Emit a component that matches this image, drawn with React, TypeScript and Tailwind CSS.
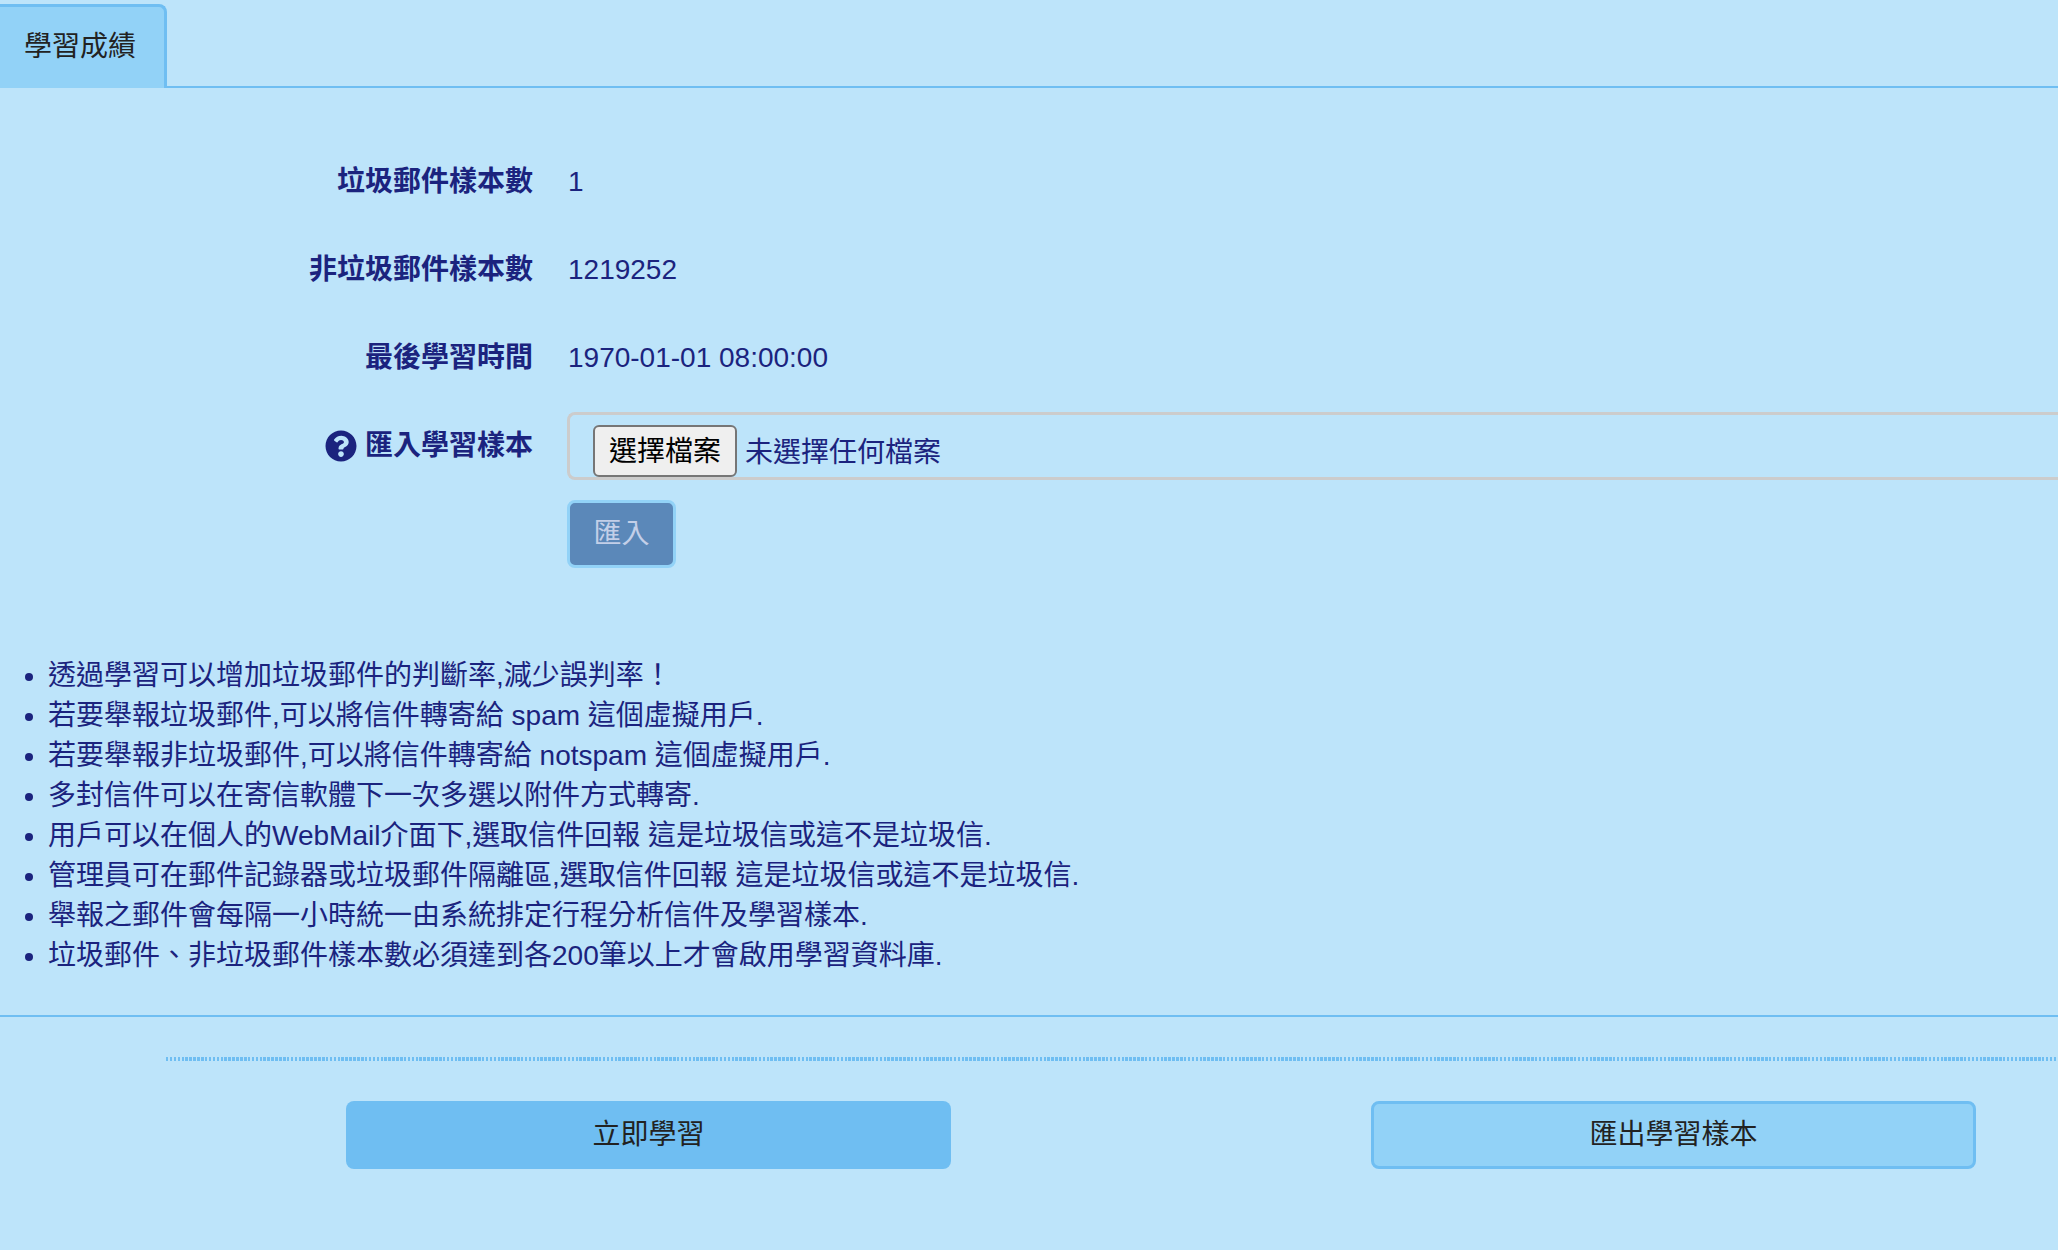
import React from 'react';
import { FaQuestionCircle } from 'react-icons/fa';

const fontStack = "font-['Liberation_Sans','Noto_Sans_CJK_TC',sans-serif]";

const notes = [
  '透過學習可以增加垃圾郵件的判斷率,減少誤判率！',
  '若要舉報垃圾郵件,可以將信件轉寄給 spam 這個虛擬用戶.',
  '若要舉報非垃圾郵件,可以將信件轉寄給 notspam 這個虛擬用戶.',
  '多封信件可以在寄信軟體下一次多選以附件方式轉寄.',
  '用戶可以在個人的WebMail介面下,選取信件回報 這是垃圾信或這不是垃圾信.',
  '管理員可在郵件記錄器或垃圾郵件隔離區,選取信件回報 這是垃圾信或這不是垃圾信.',
  '舉報之郵件會每隔一小時統一由系統排定行程分析信件及學習樣本.',
  '垃圾郵件、非垃圾郵件樣本數必須達到各200筆以上才會啟用學習資料庫.',
];

function Row({ label, children }: { label: React.ReactNode; children: React.ReactNode }) {
  return (
    <div className="flex h-[68px] items-center">
      <div className="flex w-[533px] shrink-0 items-center justify-end gap-2 font-bold">{label}</div>
      <div className="ml-[35px] min-w-0 flex-1">{children}</div>
    </div>
  );
}

export default function App() {
  return (
    <div className={`${fontStack} h-[1250px] overflow-hidden bg-[#bde4fa] text-[28px] text-[#1b237e]`}>
      <div className="flex h-[88px] items-end border-b-[2px] border-[#6fbef2] pt-1">
        <div className="-mb-[2px] flex h-[84px] w-[167px] items-center rounded-tr-[8px] border-t-[3px] border-r-[3px] border-[#6fbef2] bg-[#92d2f7] pb-[2px] pl-6 text-[#222]">
          學習成績
        </div>
      </div>

      <div className="flex flex-col gap-5 pt-[60px]">
        <Row label="垃圾郵件樣本數">1</Row>
        <Row label="非垃圾郵件樣本數">1219252</Row>
        <Row label="最後學習時間">1970-01-01 08:00:00</Row>
        <Row
          label={
            <>
              <FaQuestionCircle className="h-[32px] w-[32px]" />
              <span>匯入學習樣本</span>
            </>
          }
        >
          <div className="-ml-px flex h-[68px] items-end rounded-l-[8px] border-[3px] border-r-0 border-[#cccccc] pl-[23px]">
            <button className="flex h-[52px] w-[144px] items-center justify-center rounded-[6px] border-[2px] border-[#767676] bg-[#efefef] pt-[2px] text-black">
              選擇檔案
            </button>
            <span className="ml-2 flex h-[52px] items-center pt-1">未選擇任何檔案</span>
          </div>
        </Row>
        <div className="pl-[567px]">
          <button className="h-[68px] w-[109px] rounded-[8px] border-[3px] border-[#92d2f7] bg-[#5b88b9] text-[#c3cfe8]">
            匯入
          </button>
        </div>
      </div>

      <ul className="mt-[87px] list-disc pl-[48px]">
        {notes.map((note) => (
          <li key={note} className="h-10 leading-[42px]">
            {note}
          </li>
        ))}
      </ul>

      <div className="mt-10 border-t-[2px] border-[#6fbef2] pl-[166px] pt-10">
        <div className="h-1 bg-[repeating-linear-gradient(90deg,#6fbef2_0,#6fbef2_2.5px,transparent_2.5px,transparent_3.9px)]" />
      </div>

      <div className="mt-10 flex pl-[346px] text-[#222]">
        <button className="h-[68px] w-[605px] rounded-[8px] bg-[#6fbef2]">立即學習</button>
        <button className="ml-[420px] h-[68px] w-[605px] rounded-[8px] border-[3px] border-[#6fbef2] bg-[#92d2f7]">
          匯出學習樣本
        </button>
      </div>
    </div>
  );
}
